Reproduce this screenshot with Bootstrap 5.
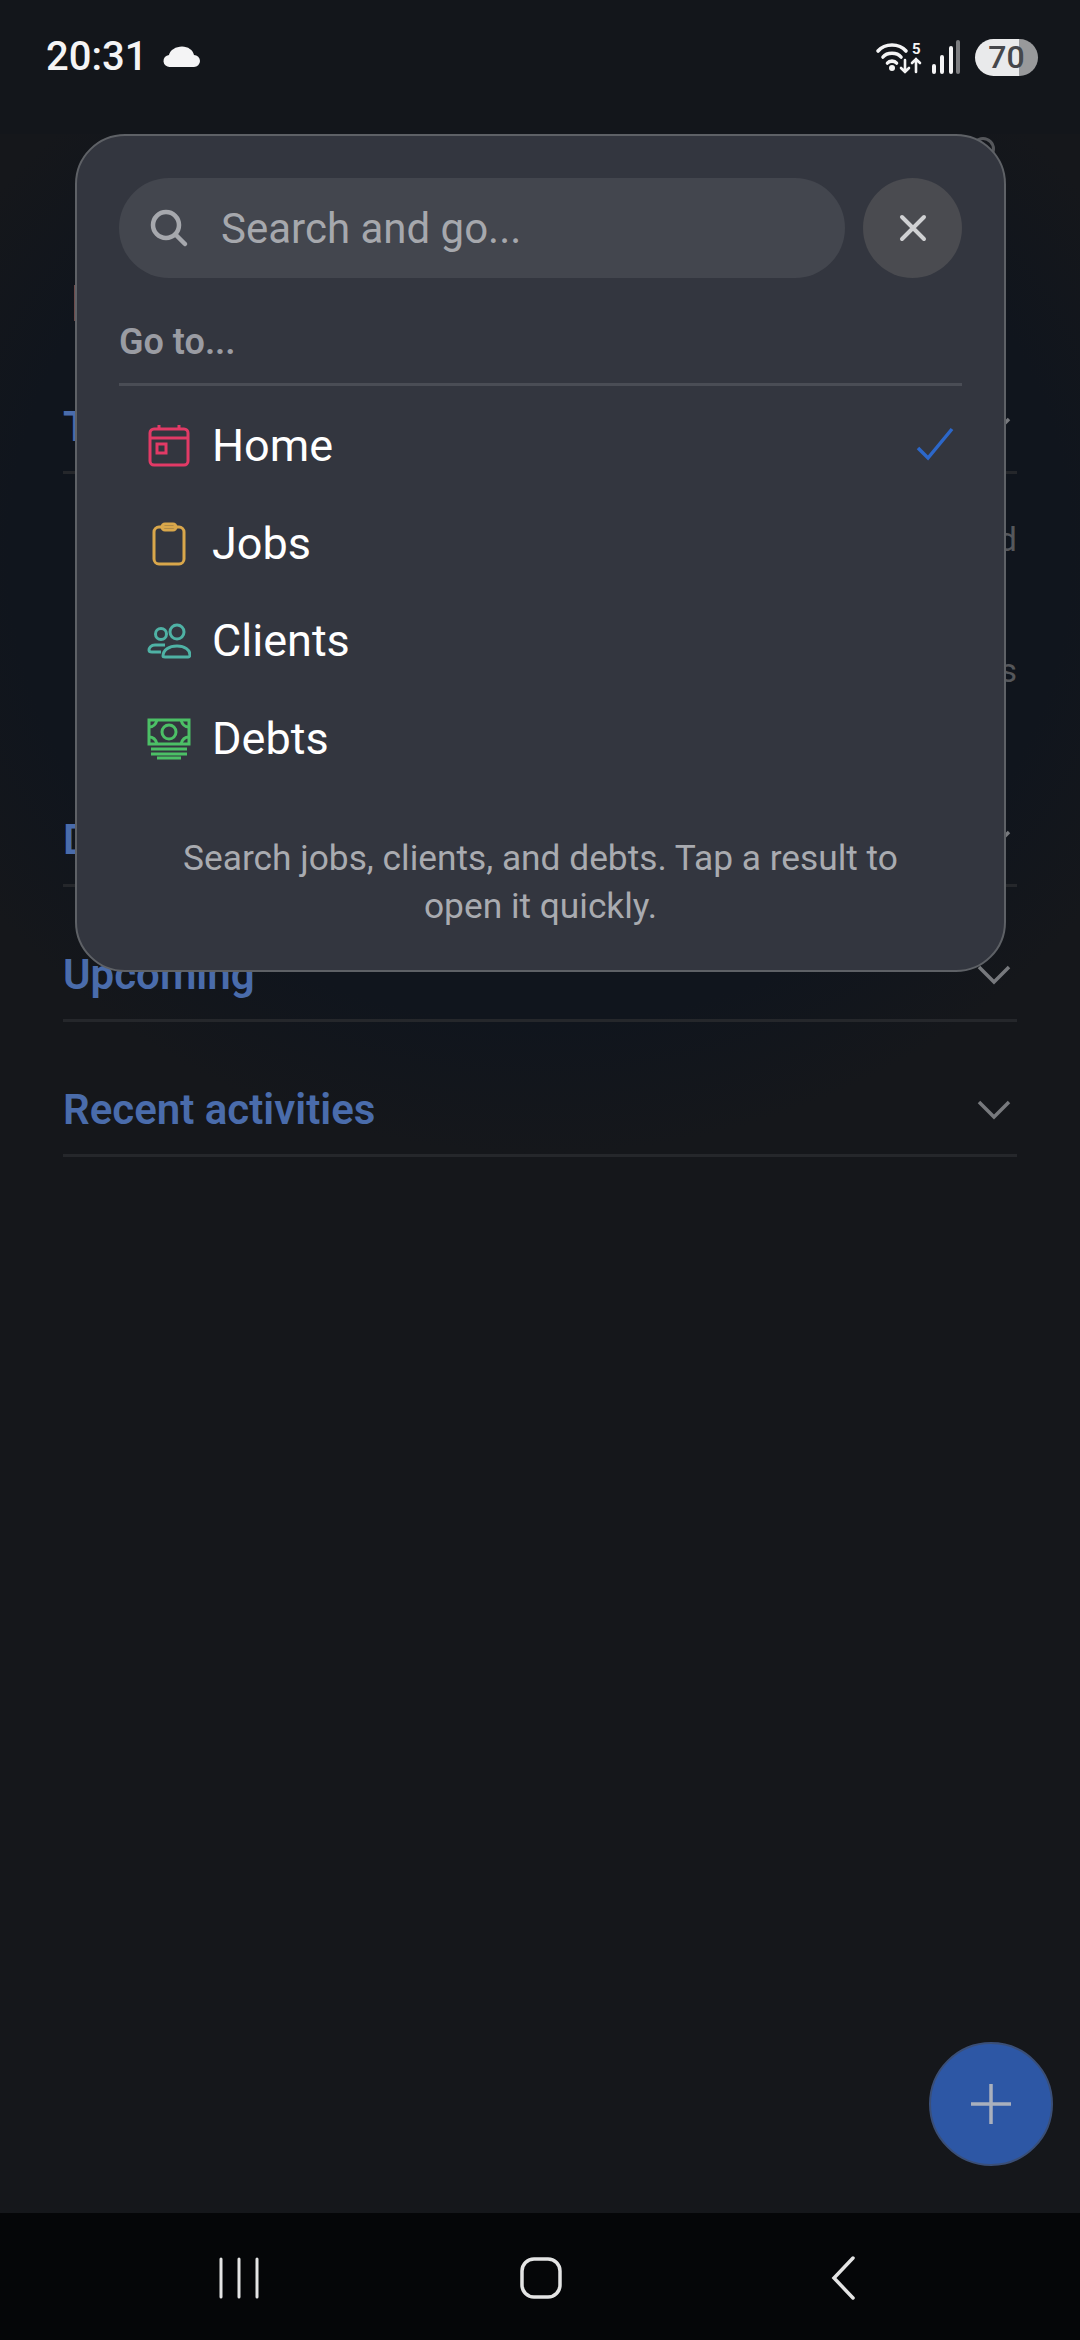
<!DOCTYPE html>
<html lang="en">
<head>
    <meta charset="UTF-8">
    <meta name="viewport" content="width=device-width, initial-scale=1.0">
    <title>Search and go</title>
    <link href="https://cdn.jsdelivr.net/npm/bootstrap@5.3.0/dist/css/bootstrap.min.css" rel="stylesheet">
    <style>
        body { background-color: #15171b; font-family: Roboto, "Liberation Sans", sans-serif; width: 1080px; height: 2340px; overflow: hidden; position: relative; }
        .screen { height: 2340px; }
        .status-row { height: 134px; padding: 34px 42px 0 46px; background: #13161b; }
        .status-time { font-size: 40px; font-weight: 500; color: #f4f4f5; line-height: 46px; }
        .status-right { height: 46px; }
        .batt { width: 63px; height: 37px; border-radius: 19px; background: linear-gradient(90deg, #e9eaeb 70%, #98999b 70%); color: #45474b; font-size: 32px; font-weight: 500; line-height: 37px; text-align: center; }
        .gap-signal { margin: 0 14px 0 8px; }
        .page-body { background: radial-gradient(ellipse 680px 600px at 540px 420px, #10151d 78%, #15171b 100%); height: 1100px; padding: 248px 63px 0; }
        .acc-row { height: 92px; color: #4a6cab; font-size: 42px; font-weight: 600; border-bottom: 3px solid #25272b; padding-right: 6px; }
        .acc-row + .acc-row { margin-top: 43px; }
        .chev { flex: none; }
        .side-word { height: 131px; color: #55575b; font-size: 34px; }
        .side-last { margin-bottom: 59px; }
        .filler { background: #15171b; }
        .nav-bar { height: 127px; background: #050608; padding: 3px 0 0 88px; }
        .nav-cell { width: 302px; }
        .sheet { position: absolute; left: 75px; top: 134px; width: 931px; height: 838px; background: #33363f; border: 2px solid #5e6166; border-radius: 50px; padding: 42px 42px 0; }
        .search-wrap { column-gap: 18px; }
        .search-pill { height: 100px; background: #43464e; border-radius: 50px; padding-left: 30px; color: #a6a8ad; font-size: 42px; column-gap: 32px; }
        .close-dot { width: 99px; height: 100px; background: #4a4b50; border-radius: 50%; }
        .goto-label { color: #9a9ca3; font-size: 36px; font-weight: 600; height: 108px; line-height: 46px; padding-top: 41px; border-bottom: 3px solid #4a4d55; }
        .go-list { padding-top: 11px; }
        .go-row { height: 97.7px; padding-left: 28px; color: #fff; font-size: 45px; }
        .go-ico { width: 44px; flex: none; margin-right: 21px; }
        .check-mark { margin: 0 8px 4px 0; }
        .help-line { color: #a9abb0; font-size: 35.3px; line-height: 48px; text-align: center; margin-top: 46px; padding: 0 40px; }
        .fab-round { position: absolute; left: 929px; top: 2042px; width: 124px; height: 124px; border-radius: 50%; background: #2d57a5; border: 2px solid #3a4f78; }
        .peek-ring { position: absolute; left: 971px; top: 137px; width: 24px; height: 24px; border: 3px solid #55575b; border-radius: 50%; }
        .peek-red { position: absolute; left: 74px; top: 285px; width: 2px; height: 36px; background: #6e4b4b; }
    </style>
</head>
<body>
    <div class="screen d-flex flex-column">
        <div class="status-row d-flex justify-content-between align-items-start">
            <div class="d-flex align-items-center gap-3">
                <span class="status-time">20:31</span>
                <svg width="38" height="22" viewBox="0 0 38 22"><path d="M7 21a6 6 0 0 1-1-12c1-5 7-8.500 13-8.500s11 3.500 12 8.500a6 6 0 0 1 0 12z" fill="#f4f4f5"/></svg>
            </div>
            <div class="status-right d-flex align-items-center">
                <svg width="48" height="36" viewBox="0 0 48 36" fill="none" stroke="#f4f4f5" stroke-width="3.600" stroke-linecap="round">
                    <path d="M3 12C10 4 24 4 31 12M8 18c4-5 14-5 18 0M12.500 24c2-2.500 7-2.500 9 0"/>
                    <circle cx="17" cy="29" r="3" fill="#f4f4f5" stroke="none"/>
                    <path stroke-width="2.600" d="M30 21v12m-4-4 4 4 4-4M41 33V20m-4 4 4-4 4 4"/>
                    <text x="37" y="15" font-family="Roboto" font-size="15" font-weight="700" fill="#f4f4f5" stroke="none">5</text>
                </svg>
                <svg class="gap-signal" width="30" height="36" viewBox="0 0 30 36" stroke-linecap="round" stroke-width="4">
                    <path d="M3 33v-6M11 33V18M20 33V9" stroke="#f4f4f5"/>
                    <path d="M27 33V3" stroke="#7c7d80"/>
                </svg>
                <div class="batt">70</div>
            </div>
        </div>
        <div class="page-body">
            <div class="acc-row d-flex justify-content-between align-items-center">Today
                <svg class="chev" width="34" height="20" viewBox="0 0 34 20" fill="none" stroke="#77797d" stroke-width="3.500"><path d="M2 2l15 15L32 2"/></svg>
            </div>
            <div class="side-word d-flex align-items-center justify-content-end">Paid</div>
            <div class="side-word side-last d-flex align-items-center justify-content-end">Jobs</div>
            <div class="acc-row d-flex justify-content-between align-items-center">Debts
                <svg class="chev" width="34" height="20" viewBox="0 0 34 20" fill="none" stroke="#77797d" stroke-width="3.500"><path d="M2 2l15 15L32 2"/></svg>
            </div>
            <div class="acc-row d-flex justify-content-between align-items-center">Upcoming
                <svg class="chev" width="34" height="20" viewBox="0 0 34 20" fill="none" stroke="#77797d" stroke-width="3.500"><path d="M2 2l15 15L32 2"/></svg>
            </div>
            <div class="acc-row d-flex justify-content-between align-items-center">Recent activities
                <svg class="chev" width="34" height="20" viewBox="0 0 34 20" fill="none" stroke="#77797d" stroke-width="3.500"><path d="M2 2l15 15L32 2"/></svg>
            </div>
        </div>
        <div class="filler flex-grow-1"></div>
        <div class="nav-bar d-flex align-items-center">
            <div class="nav-cell d-flex justify-content-center">
                <svg width="42" height="42" viewBox="0 0 42 42" stroke="#e4e4e4" stroke-width="3" stroke-linecap="round"><path d="M3 2v38M21 2v38M39 2v38"/></svg>
            </div>
            <div class="nav-cell d-flex justify-content-center">
                <svg width="42" height="44" viewBox="0 0 42 44" fill="none" stroke="#e4e4e4" stroke-width="3.500"><rect x="2" y="3" width="38" height="38" rx="12"/></svg>
            </div>
            <div class="nav-cell d-flex justify-content-center">
                <svg width="26" height="44" viewBox="0 0 26 44" fill="none" stroke="#e4e4e4" stroke-width="3.500" stroke-linecap="round"><path d="M23 2L4 22l19 20"/></svg>
            </div>
        </div>
    </div>

    <div class="peek-ring"></div>
    <div class="peek-red"></div>

    <div class="sheet">
        <div class="search-wrap d-flex">
            <div class="search-pill flex-grow-1 d-flex align-items-center">
                <svg width="40" height="40" viewBox="0 0 40 40" fill="none" stroke="#a6a8ad" stroke-width="4.500" stroke-linecap="round"><circle cx="17" cy="17" r="13"/><path d="M27 27l9 9"/></svg>
                <span>Search and go...</span>
            </div>
            <div class="close-dot d-flex align-items-center justify-content-center">
                <svg width="28" height="28" viewBox="0 0 28 28" stroke="#d0d1d3" stroke-width="4" stroke-linecap="round"><path d="M3 3l22 22M25 3L3 25"/></svg>
            </div>
        </div>
        <div class="goto-label">Go to...</div>
        <div class="go-list">
            <div class="go-row d-flex align-items-center">
                <svg class="go-ico" width="44" height="44" viewBox="0 0 44 44" fill="none" stroke="#e23a66" stroke-width="3"><rect x="3" y="5" width="38" height="36" rx="4"/><path d="M3 14h38M12 1v5M32 1v5"/><rect x="10" y="20" width="9" height="9"/></svg>
                <span class="flex-grow-1">Home</span>
                <svg class="check-mark" width="38" height="34" viewBox="0 0 38 34" fill="none" stroke="#2c67c9" stroke-width="3.500"><path d="M2 21l10 10L36 2"/></svg>
            </div>
            <div class="go-row d-flex align-items-center">
                <svg class="go-ico" width="44" height="44" viewBox="0 0 44 44" fill="none" stroke="#d9a74b" stroke-width="3"><rect x="7" y="5" width="30" height="37" rx="5"/><rect x="15" y="2" width="14" height="6" rx="3"/></svg>
                <span>Jobs</span>
            </div>
            <div class="go-row d-flex align-items-center">
                <svg class="go-ico" width="44" height="44" viewBox="0 0 44 44" fill="none" stroke="#4fb2a5" stroke-width="3"><circle cx="14" cy="15" r="5.500"/><circle cx="30" cy="13" r="7"/><path d="M18 26H8c-4 0-6 3-6 5 0 1 1 2 3 2h9M16 37c0-6 6-10 14-10s13 4 13 9c0 1-1 2-2 2H18c-1 0-2 0-2-1z"/></svg>
                <span>Clients</span>
            </div>
            <div class="go-row d-flex align-items-center">
                <svg class="go-ico" width="44" height="44" viewBox="0 0 44 44" fill="none" stroke="#4cc066" stroke-width="3"><rect x="2" y="3" width="40" height="24"/><circle cx="22" cy="15" r="7"/><path d="M2 10c4 0 7-3 8-7M42 10c-4 0-7-3-8-7M2 20c4 0 7 3 8 7M42 20c-4 0-7 3-8 7M4 32h36M4 37h36M10 41h24"/></svg>
                <span>Debts</span>
            </div>
        </div>
        <div class="help-line">Search jobs, clients, and debts. Tap a result to open it quickly.</div>
    </div>

    <div class="fab-round d-flex align-items-center justify-content-center">
        <svg width="42" height="42" viewBox="0 0 42 42" stroke="#a9b0bd" stroke-width="3.500"><path d="M21 1v40M1 21h40"/></svg>
    </div>
    <script src="https://cdn.jsdelivr.net/npm/bootstrap@5.3.0/dist/js/bootstrap.bundle.min.js"></script>
</body>
</html>
